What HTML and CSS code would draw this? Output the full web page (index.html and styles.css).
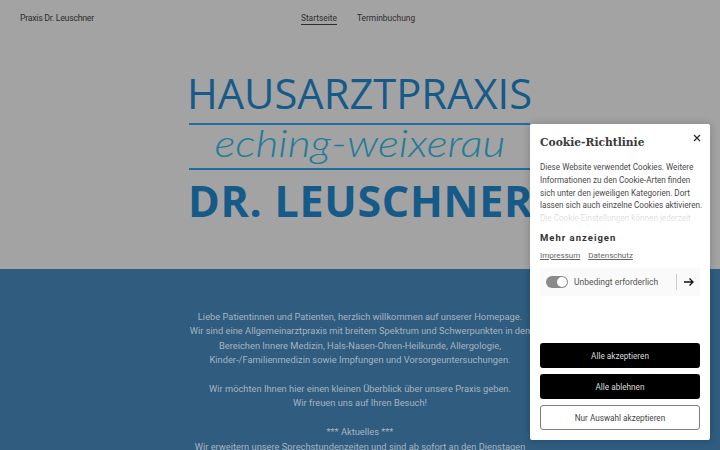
FILE: index.html
```html
<!DOCTYPE html>
<html lang="de">
<head>
<meta charset="utf-8">
<title>Praxis Dr. Leuschner</title>
<link rel="stylesheet" href="styles.css">
</head>
<body>
<div class="page">
  <section class="hero">
    <header class="topbar">
      <div class="brand">Praxis Dr. Leuschner</div>
      <nav class="nav">
        <a class="nav-link active">Startseite</a>
        <a class="nav-link">Terminbuchung</a>
      </nav>
    </header>
    <div class="logo">
      <div class="logo-top">HAUSARZTPRAXIS</div>
      <div class="logo-script"><svg class="script-svg" viewBox="0 0 342 44" width="342" height="44"><text x="171" y="32" text-anchor="middle" textLength="291" lengthAdjust="spacingAndGlyphs" class="script-text">eching-weixerau</text></svg></div>
      <div class="logo-bottom">DR. LEUSCHNER</div>
    </div>
  </section>
  <section class="intro">
    <p>Liebe Patientinnen und Patienten, herzlich willkommen auf unserer Homepage.<br>Wir sind eine Allgemeinarztpraxis mit breitem Spektrum und Schwerpunkten in den<br>Bereichen Innere Medizin, Hals-Nasen-Ohren-Heilkunde, Allergologie,<br>Kinder-/Familienmedizin sowie Impfungen und Vorsorgeuntersuchungen.</p>
    <p>Wir möchten Ihnen hier einen kleinen Überblick über unsere Praxis geben.<br>Wir freuen uns auf Ihren Besuch!</p>
    <p>*** Aktuelles ***<br>Wir erweitern unsere Sprechstundenzeiten und sind ab sofort an den Dienstagen</p>
  </section>
</div>
<aside class="cookie">
  <button class="close" aria-label="Schließen"><svg viewBox="0 0 10 10" width="10" height="10"><path d="M2 2l6 6M8 2l-6 6" class="close-x"/></svg></button>
  <h2 class="cookie-title">Cookie-Richtlinie</h2>
  <div class="cookie-text">Diese Website verwendet Cookies. Weitere Informationen zu den Cookie-Arten finden sich unter den jeweiligen Kategorien. Dort lassen sich auch einzelne Cookies aktivieren. Die Cookie-Einstellungen können jederzeit</div>
  <div class="more">Mehr anzeigen</div>
  <div class="links"><a class="doc-link">Impressum</a><a class="doc-link">Datenschutz</a></div>
  <div class="category">
    <span class="toggle"><span class="knob"></span></span>
    <span class="cat-label">Unbedingt erforderlich</span>
    <span class="cat-arrow"><svg viewBox="0 0 12 12" width="12" height="12"><path d="M1 6h9M6.500 2.500L10 6l-3.500 3.500" class="arrow"/></svg></span>
  </div>
  <div class="actions">
    <button class="btn dark">Alle akzeptieren</button>
    <button class="btn dark">Alle ablehnen</button>
    <button class="btn outline">Nur Auswahl akzeptieren</button>
  </div>
</aside>
</body>
</html>
```

FILE: styles.css
```css
* { box-sizing: border-box; }
html, body { margin: 0; height: 450px; overflow: hidden; }
body { font-family: "Roboto", "Open Sans", sans-serif; background: #a3a3a3; }
.page { width: 720px; }
.hero { height: 269px; background: #a3a3a3; display: flex; flex-direction: column; }
.topbar { position: relative; display: flex; justify-content: center; height: 73px; padding-top: 13px; padding-right: 4px; font-size: 8.400px; color: #2e2e2e; }
.brand { position: absolute; left: 20px; top: 12px; line-height: 12px; font-size: 8.800px; letter-spacing: -.3px; }
.nav { display: flex; gap: 20px; line-height: 11px; }
.nav-link { height: 12px; }
.nav-link.active { border-bottom: 1px solid #2e2e2e; }
.logo { width: 344px; margin-left: 186px; }
.logo-top { font-family: "Open Sans", sans-serif; font-size: 41.700px; line-height: 40px; color: #155a88; white-space: nowrap; margin-left: 1px; }
.logo-script { margin-top: 10px; height: 47px; width: 341px; margin-left: 3px; border-top: 2px solid #1e6f9f; border-bottom: 2px solid #1e6f9f; }
.script-svg { display: block; overflow: visible; }
.script-text { font-family: "Lato", sans-serif; font-weight: 300; font-style: italic; font-size: 38px; fill: #227c98; }
.logo-bottom { margin-top: 9px; margin-left: 2px; font-family: "Open Sans", sans-serif; font-weight: 700; font-size: 43px; letter-spacing: .7px; line-height: 44px; color: #155a88; white-space: nowrap; }
.intro { height: 181px; padding-top: 41px; background: #2f5c7f; color: #a6b5c2; font-size: 9.300px; line-height: 14.400px; text-align: center; overflow: hidden; white-space: nowrap; }
.intro p { margin: 0 0 14.400px; }
.cookie { position: absolute; left: 530px; top: 124px; width: 180px; height: 316px; padding: 10px; background: #fff; border-radius: 2px; box-shadow: 0 0 8px rgba(0,0,0,.2); display: flex; flex-direction: column; font-size: 8.150px; color: #4a4a4a; }
.close { position: absolute; top: 9px; right: 8px; width: 10px; height: 10px; padding: 0; border: 0; background: none; }
.close svg { display: block; }
.close-x { stroke: #222; stroke-width: 1.100; fill: none; }
.cookie-title { margin: 0; font-family: "DejaVu Serif", serif; font-stretch: condensed; font-size: 11.900px; line-height: 17px; font-weight: 700; color: #3a3a3a; }
.cookie-text { position: relative; margin: 10px -4px 0 0; height: 64px; overflow: hidden; line-height: 12.800px; }
.cookie-text::after { content: ""; position: absolute; left: 0; right: 0; bottom: 0; height: 13px; background: linear-gradient(rgba(255,255,255,.75), rgba(255,255,255,.9)); }
.more { margin-top: 7px; font-size: 9.500px; letter-spacing: 1px; font-weight: 700; color: #333; line-height: 12px; }
.links { display: flex; gap: 8px; margin-top: 6px; line-height: 12px; color: #666; font-size: 8px; }
.doc-link { text-decoration: underline; }
.category { display: flex; align-items: center; height: 28px; margin-top: 6px; padding-left: 6px; background: #fafafa; color: #555; font-size: 8.500px; }
.toggle { position: relative; width: 22px; height: 12px; border-radius: 6px; background: #8a8a8a; flex: none; }
.knob { position: absolute; right: 1px; top: 1px; width: 10px; height: 10px; border-radius: 50%; background: #fff; }
.cat-label { margin-left: 6px; flex: 1; }
.cat-arrow { display: flex; align-items: center; justify-content: center; width: 24px; height: 16px; border-left: 1px solid #ccc; }
.arrow { stroke: #111; stroke-width: 1.300; fill: none; }
.actions { margin-top: auto; display: flex; flex-direction: column; gap: 6px; }
.btn { height: 25px; padding: 0; border-radius: 3px; font-family: inherit; font-size: 8.200px; }
.dark { background: #000; color: #ddd; border: 0; }
.outline { background: #fff; color: #444; border: 1px solid #808080; }
```
